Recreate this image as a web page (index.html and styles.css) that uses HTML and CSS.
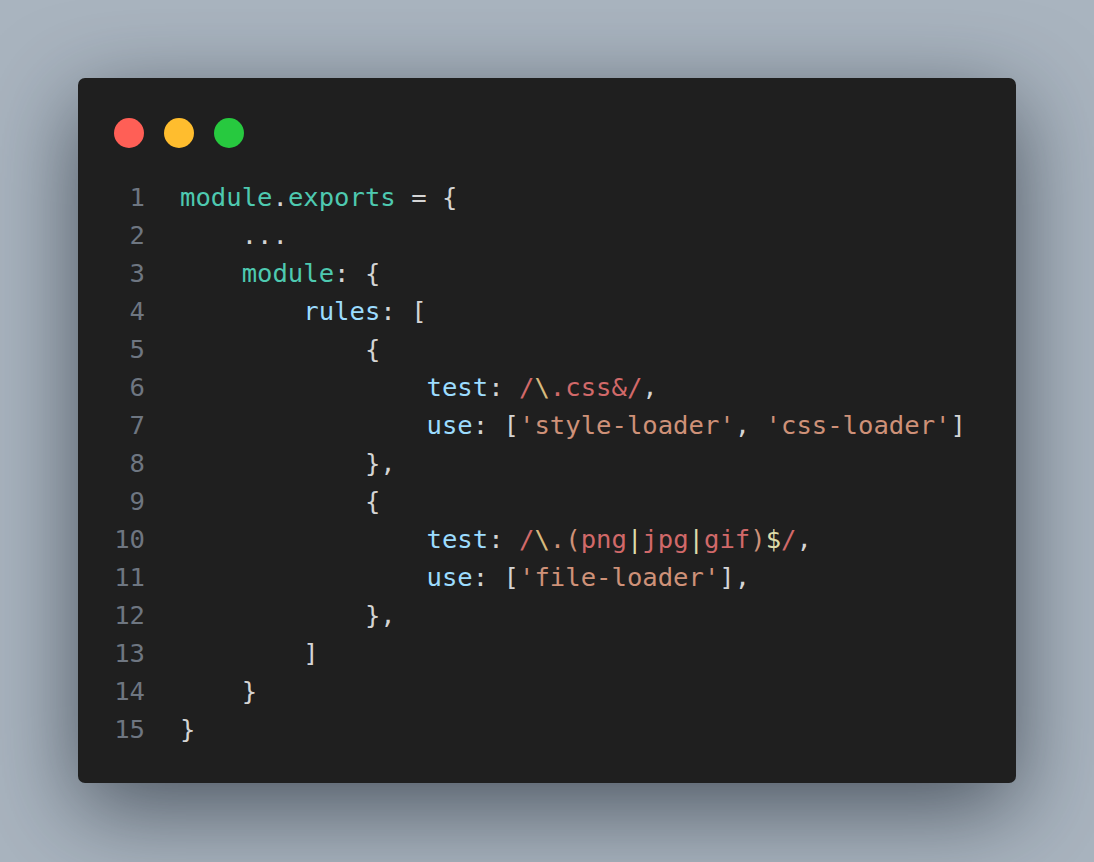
FILE: index.html
```html
<!DOCTYPE html>
<html>
<head>
<meta charset="utf-8">
<link rel="stylesheet" href="styles.css">
</head>
<body>
<div class="window">
  <div class="lights">
    <span class="dot red"></span>
    <span class="dot yellow"></span>
    <span class="dot green"></span>
  </div>
  <div class="code">
    <span class="ln">1</span><span class="line"><span class="tl">module</span><span class="p">.</span><span class="tl">exports</span><span class="p"> = {</span></span>
    <span class="ln">2</span><span class="line"><span class="p">    ...</span></span>
    <span class="ln">3</span><span class="line">    <span class="tl">module</span><span class="p">: {</span></span>
    <span class="ln">4</span><span class="line">        <span class="kb">rules</span><span class="p">: [</span></span>
    <span class="ln">5</span><span class="line"><span class="p">            {</span></span>
    <span class="ln">6</span><span class="line">                <span class="kb">test</span><span class="p">: </span><span class="rx">/</span><span class="esc">\</span><span class="rx">.css&amp;/</span><span class="p">,</span></span>
    <span class="ln">7</span><span class="line">                <span class="kb">use</span><span class="p">: [</span><span class="str">'style-loader'</span><span class="p">, </span><span class="str">'css-loader'</span><span class="p">]</span></span>
    <span class="ln">8</span><span class="line"><span class="p">            },</span></span>
    <span class="ln">9</span><span class="line"><span class="p">            {</span></span>
    <span class="ln">10</span><span class="line">                <span class="kb">test</span><span class="p">: </span><span class="rx">/</span><span class="esc">\</span><span class="str">.(</span><span class="rx">png</span><span class="bar">|</span><span class="rx">jpg</span><span class="bar">|</span><span class="rx">gif</span><span class="str">)</span><span class="bar">$</span><span class="rx">/</span><span class="p">,</span></span>
    <span class="ln">11</span><span class="line">                <span class="kb">use</span><span class="p">: [</span><span class="str">'file-loader'</span><span class="p">],</span></span>
    <span class="ln">12</span><span class="line"><span class="p">            },</span></span>
    <span class="ln">13</span><span class="line"><span class="p">        ]</span></span>
    <span class="ln">14</span><span class="line"><span class="p">    }</span></span>
    <span class="ln">15</span><span class="line"><span class="p">}</span></span>
  </div>
</div>
</body>
</html>
```

FILE: styles.css
```css
html, body {
  margin: 0;
  padding: 0;
}
body {
  min-height: 862px;
  box-sizing: border-box;
  padding: 78px;
  background: #a9b4bf;
}
.window {
  background: #1f1f1f;
  border-radius: 7px;
  padding: 40px 36px 35px 36px;
  box-shadow: 0 25px 90px rgba(20, 28, 38, 0.62);
}
.lights {
  display: flex;
  gap: 20px;
  height: 30px;
}
.dot {
  width: 30px;
  height: 30px;
  border-radius: 50%;
  display: block;
}
.red { background: #ff5f56; }
.yellow { background: #ffbd2e; }
.green { background: #27c93f; }
.code {
  margin-top: 30px;
  display: grid;
  grid-template-columns: 31px 1fr;
  column-gap: 35px;
  font-family: "DejaVu Sans Mono", "Liberation Mono", monospace;
  font-size: 25.6px;
  line-height: 38px;
  color: #d4d4d4;
}
.ln {
  text-align: right;
  color: #6e7681;
}
.line {
  white-space: pre;
}
.tl { color: #4ec9b0; }
.kb { color: #9cdcfe; }
.p { color: #d4d4d4; }
.str { color: #ce9178; }
.rx { color: #d16969; }
.esc { color: #d7ba7d; }
.bar { color: #dcdcaa; }
```
